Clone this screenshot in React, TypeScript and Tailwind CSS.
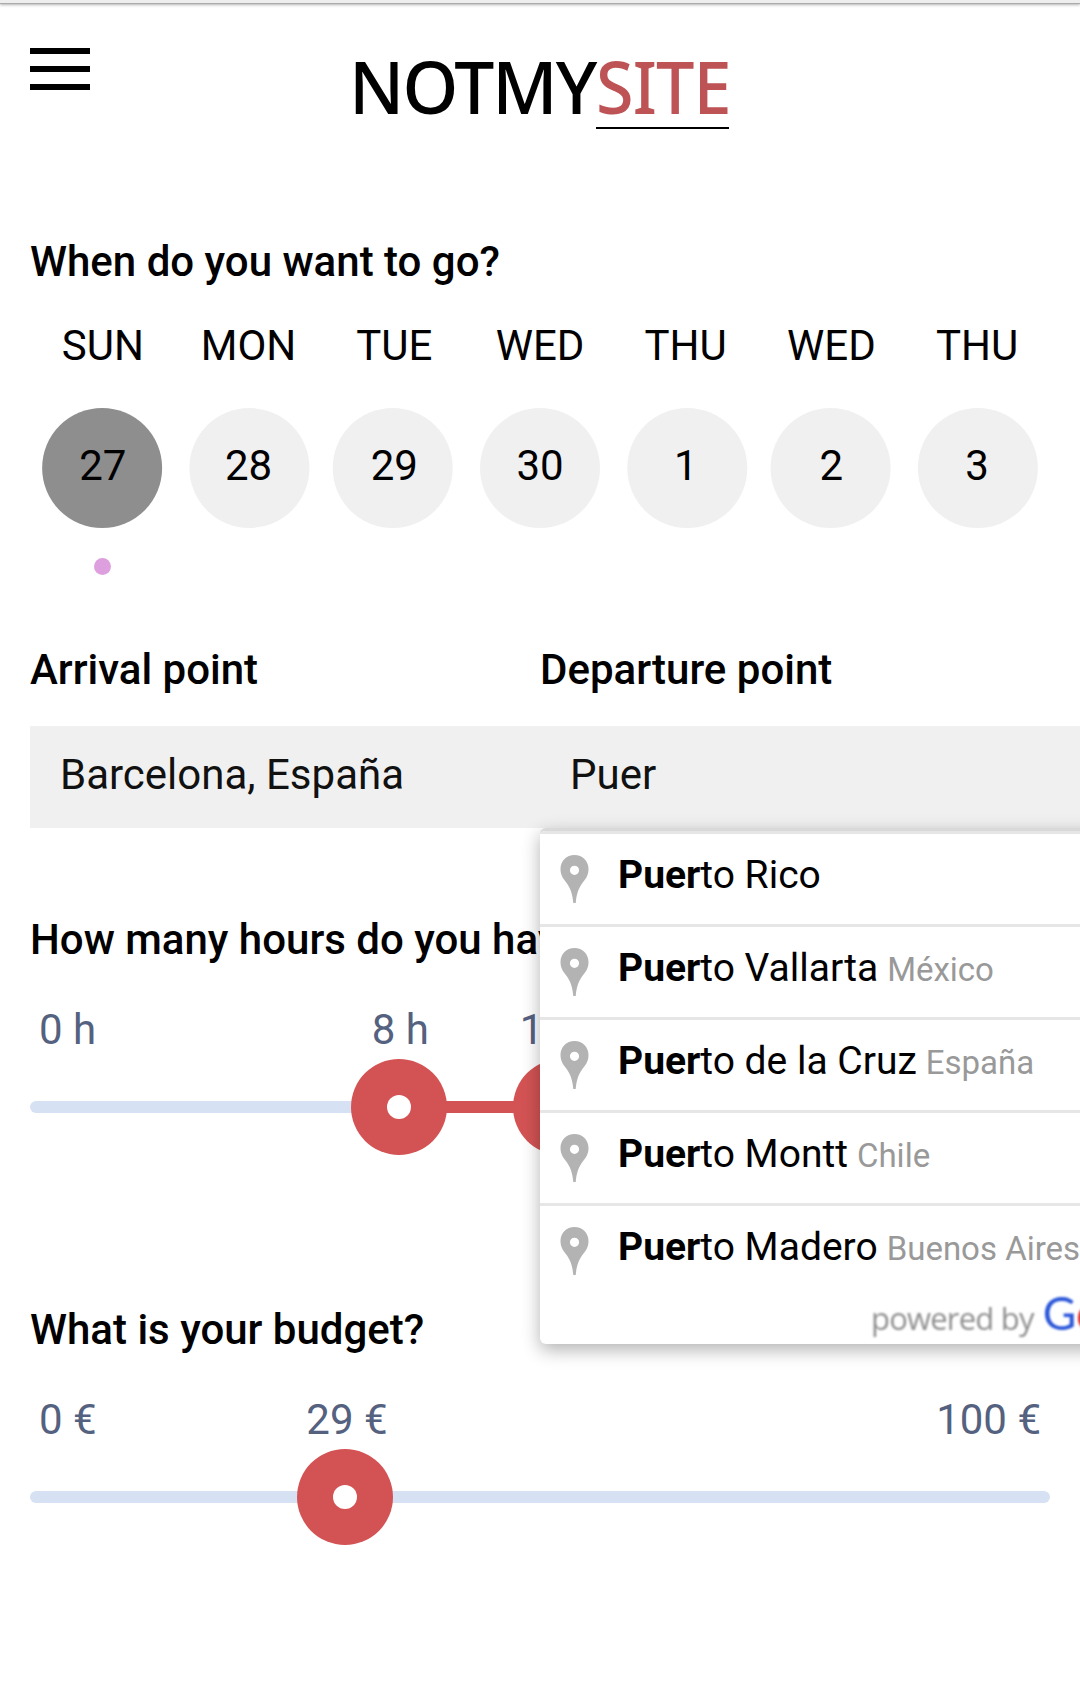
import React, { useState } from 'react';

interface Day {
  name: string;
  date: number;
  nudge: string;
}

interface Place {
  rest: string;
  region?: string;
}

const days: Day[] = [
  { name: 'SUN', date: 27, nudge: '-translate-x-[0.86px]' },
  { name: 'MON', date: 28, nudge: 'translate-x-[0.43px]' },
  { name: 'TUE', date: 29, nudge: '-translate-x-[1.29px]' },
  { name: 'WED', date: 30, nudge: '' },
  { name: 'THU', date: 1, nudge: 'translate-x-[1.29px]' },
  { name: 'WED', date: 2, nudge: '-translate-x-[0.43px]' },
  { name: 'THU', date: 3, nudge: 'translate-x-[0.86px]' },
];

const places: Place[] = [
  { rest: 'to Rico' },
  { rest: 'to Vallarta', region: 'México' },
  { rest: 'to de la Cruz', region: 'España' },
  { rest: 'to Montt', region: 'Chile' },
  { rest: 'to Madero', region: 'Buenos Aires' },
];

// Handles are 96px wide and never leave the track
const handlePos = (ratio: number) => `calc(48px + (100% - 96px) * ${ratio})`;

const snappedPos = (ratio: number) => `round(nearest, ${handlePos(ratio)}, 3px)`;

const Pin = () => (
  <svg className="w-[45px] h-[60px] shrink-0 mt-[13px] mr-[21px] blur-[0.7px]" viewBox="0 0 45 60">
    <path
      fill="#b3b3b3"
      fillRule="evenodd"
      d="M22.5 8C14.500 8 8.500 14 8.500 22c0 7 3.500 10.500 6.500 14.500C18.500 41.500 20.500 47 21.300 56h2.400C24.500 47 26.500 41.500 30 36.500C33 32.500 36.500 29 36.500 22c0-8-6-14-14-14zm0 10.700a4.600 4.600 0 1 1 0 9.200 4.600 4.600 0 0 1 0-9.200z"
    />
  </svg>
);

const Handle = ({ ratio }: { ratio: number }) => (
  <div
    className="absolute top-0 -translate-x-1/2 w-24 h-24 rounded-full bg-[#d35354] flex items-center justify-center"
    style={{ left: snappedPos(ratio) }}
  >
    <div className="w-6 h-6 rounded-full bg-white" />
  </div>
);

interface SliderProps {
  title: string;
  unit: string;
  max: number;
  values: number[];
}

const Slider: React.FC<SliderProps> = ({ title, unit, max, values }) => {
  const ratios = values.map((v) => v / max);

  return (
    <section>
      <h2 className="font-medium whitespace-nowrap">{title}</h2>
      <div className="relative flex justify-between mt-[42px] px-[9px] text-[#54617f]">
        <span>0 {unit}</span>
        {values.map((v, i) => (
          <span
            key={v}
            className={`absolute top-0 -translate-x-1/2 whitespace-nowrap ${i === 0 ? 'ml-px' : ''}`}
            style={{ left: handlePos(ratios[i]) }}
          >
            {v} {unit}
          </span>
        ))}
        <span>{max} {unit}</span>
      </div>
      <div className="relative h-24 mt-[5px] flex items-center">
        <div className="w-full h-3 rounded-full bg-[#d7e1f4]" />
        {ratios.length > 1 && (
          <div
            className="absolute h-3 bg-[#d35354]"
            style={{ left: handlePos(ratios[0]), right: `calc(100% - (${handlePos(ratios[1])}))` }}
          />
        )}
        {ratios.map((r) => (
          <Handle key={r} ratio={r} />
        ))}
      </div>
    </section>
  );
};

const Suggestions = ({ query }: { query: string }) => (
  <div className="absolute left-0 top-full w-[600px] h-[516px] bg-white rounded-[6px] border-t-3 border-[#d9d9d9] shadow-[0_6px_18px_rgba(0,0,0,0.3)] overflow-hidden z-10">
    {places.map((place) => (
      <div
        key={place.rest}
        className="flex h-[93px] border-t-3 border-[#e6e6e6] px-3 text-[33px] leading-[82px] text-[#999] whitespace-nowrap"
      >
        <Pin />
        <p>
          <span className="text-[39px] text-black pr-[9px]">
            <b className="font-bold">{query}</b>
            {place.rest}
          </span>
          {place.region}
        </p>
      </div>
    ))}
    <div className="flex items-baseline h-12 -mt-[5px] pl-[331px] whitespace-nowrap blur-[0.8px] font-['Open_Sans',sans-serif]">
      <span className="text-[31px] leading-[42px] tracking-[-0.8px] text-[#8f8f8f]">powered by</span>
      <span className="ml-[9px] mt-px text-[46px] leading-[42px] font-['Lato',sans-serif]">
        <span className="text-[#2a56d8]">G</span>
        <span className="text-[#dd3030]">o</span>
      </span>
    </div>
  </div>
);

const App: React.FC = () => {
  const [selected, setSelected] = useState(27);
  const [arrival, setArrival] = useState('Barcelona, España');
  const [departure, setDeparture] = useState('Puer');

  return (
    <div className="w-[1080px] h-[1683px] overflow-hidden bg-white text-black text-[42px] leading-[48px] font-['Roboto',sans-serif]">
      {/* Edge of the browser toolbar */}
      <div className="h-1 bg-[#eee] border-b border-[#aaa] shadow-[0_1px_3px_rgba(0,0,0,0.3)]" />

      {/* Header */}
      <header className="flex h-[234px] pl-[30px]">
        <button className="flex flex-col gap-3 w-[60px] h-[42px] mt-11" aria-label="Menu">
          <span className="h-1.5 w-full bg-black" />
          <span className="h-1.5 w-full bg-black" />
          <span className="h-1.5 w-full bg-black" />
        </button>
        <div className="flex ml-[259px] mt-10 h-[85px] text-[73.5px] leading-[84px] font-medium font-['Noto_Sans',sans-serif]">
          <span className="w-[247px] whitespace-nowrap">
            <span className="inline-block origin-left scale-x-[0.97] tracking-[-2px]">NOTMY</span>
          </span>
          <span className="w-[133px] h-[85px] border-b-2 border-black text-[#be5356] whitespace-nowrap">
            <span className="inline-block origin-left scale-x-[0.93] tracking-[-1px]">SITE</span>
          </span>
        </div>
      </header>

      <main className="px-[30px]">
        {/* Date picker */}
        <section>
          <h2 className="font-medium">When do you want to go?</h2>
          <div className="grid grid-cols-7 mt-9">
            {days.map((day) => (
              <div key={day.date} className="flex flex-col items-center">
                <span>{day.name}</span>
                <button
                  onClick={() => setSelected(day.date)}
                  className="grid place-items-center mt-[38px] w-[120px] h-[120px]"
                >
                  <span
                    className={`col-start-1 row-start-1 w-[120px] h-[120px] rounded-full ${day.nudge} ${
                      day.date === selected ? 'bg-[#8e8e8e]' : 'bg-[#f0f0f0]'
                    }`}
                  />
                  <span className="col-start-1 row-start-1 z-1 pb-1">{day.date}</span>
                </button>
                {day.date === selected && (
                  <span className="w-[17px] h-[17px] mt-[30px] rounded-full bg-[#dd9fdd]" />
                )}
              </div>
            ))}
          </div>
        </section>

        {/* Route */}
        <section className="flex w-[1050px] mt-[71px]">
          <div className="w-[510px]">
            <h2 className="font-medium">Arrival point</h2>
            <input
              value={arrival}
              onChange={(e) => setArrival(e.target.value)}
              className="block w-full h-[102px] mt-8 px-[30px] pb-1.5 bg-[#f0f0f0] text-[#111] outline-none"
            />
          </div>
          <div className="relative w-[540px]">
            <h2 className="font-medium">Departure point</h2>
            <input
              value={departure}
              onChange={(e) => setDeparture(e.target.value)}
              className="block w-full h-[102px] mt-8 px-[30px] pb-1.5 bg-[#f0f0f0] text-[#111] outline-none"
            />
            <Suggestions query={departure} />
          </div>
        </section>

        <div className="mt-[88px] flex flex-col gap-[151px]">
          <Slider title="How many hours do you have?" unit="h" max={23} values={[8, 12]} />
          <Slider title="What is your budget?" unit="€" max={100} values={[29]} />
        </div>
      </main>
    </div>
  );
};

export default App;
